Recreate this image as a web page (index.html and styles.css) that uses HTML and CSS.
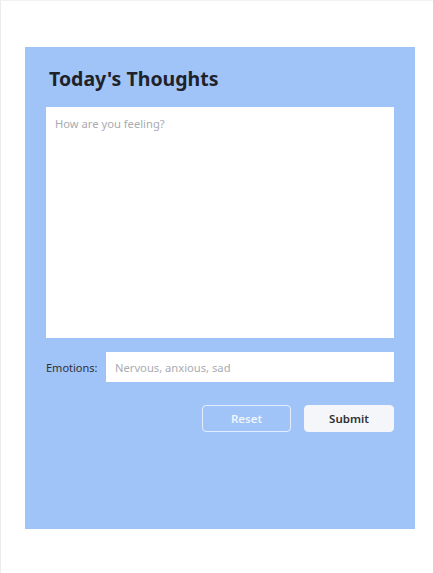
FILE: index.html
```html
<!DOCTYPE html>
<html>
<head>
<meta charset="utf-8">
<link rel="stylesheet" href="styles.css">
</head>
<body>
<div class="page">
  <div class="panel">
    <h1 class="title">Today's Thoughts</h1>
    <textarea class="thoughts" placeholder="How are you feeling?"></textarea>
    <div class="emotion-row">
      <label class="emotion-label">Emotions:</label>
      <input class="emotion-input" type="text" placeholder="Nervous, anxious, sad">
    </div>
    <div class="actions">
      <button class="btn btn-reset">Reset</button>
      <button class="btn btn-submit">Submit</button>
    </div>
  </div>
</div>
</body>
</html>
```
FILE: styles.css
```css
html, body {
  margin: 0;
  padding: 0;
  background: #ffffff;
}
body {
  font-family: "Noto Sans", "Open Sans", sans-serif;
}
.page {
  box-sizing: border-box;
  width: 433px;
  height: 573px;
  border-left: 1px solid #ececec;
  border-top: 1px solid #f2f2f2;
  padding: 46px 0 0 24px;
}
.panel {
  box-sizing: border-box;
  width: 390px;
  height: 482px;
  background: #a0c4f8;
  padding: 17px 21px 0 21px;
  display: flex;
  flex-direction: column;
}
.title {
  margin: 0 0 0 3px;
  font-size: 19.5px;
  line-height: 30px;
  font-weight: 700;
  color: #1f2329;
  height: 43px;
}
.thoughts {
  box-sizing: border-box;
  display: block;
  width: 348px;
  height: 231px;
  border: none;
  outline: none;
  resize: none;
  padding: 9px 9px;
  font-family: inherit;
  font-size: 11.2px;
  background: #ffffff;
  margin: 0;
}
.thoughts::placeholder, .emotion-input::placeholder {
  color: #a8abb2;
}
.emotion-row {
  display: flex;
  align-items: center;
  margin-top: 14px;
  gap: 8px;
}
.emotion-label {
  width: 52px;
  font-size: 11px;
  color: #303133;
  white-space: nowrap;
}
.emotion-input {
  box-sizing: border-box;
  width: 288px;
  height: 30px;
  border: none;
  outline: none;
  padding: 0 9px;
  font-family: inherit;
  font-size: 11.2px;
  background: #ffffff;
  margin: 0;
}
.actions {
  display: flex;
  justify-content: flex-end;
  gap: 13px;
  margin-top: 23px;
}
.btn {
  box-sizing: border-box;
  height: 27px;
  width: 90px;
  border-radius: 4px;
  font-family: inherit;
  font-size: 11.5px;
  font-weight: 600;
  cursor: pointer;
}
.btn-reset {
  width: 89px;
  background: transparent;
  border: 1px solid rgba(255,255,255,0.7);
  color: rgba(255,255,255,0.85);
}
.btn-submit {
  background: #f4f6f9;
  border: 1px solid #f4f6f9;
  color: #303133;
}
```
